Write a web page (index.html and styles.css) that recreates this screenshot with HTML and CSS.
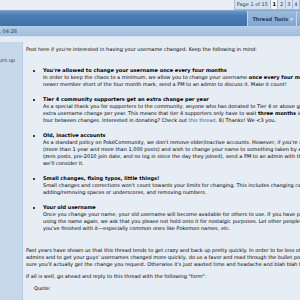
FILE: index.html
```html
<!DOCTYPE html>
<html lang="en">
<head>
    <meta charset="UTF-8">
    <meta name="viewport" content="width=device-width, initial-scale=1.0">
    <title>Username Changes - PokéCommunity</title>
    <link rel="stylesheet" href="styles.css">
</head>
<body>
    <!-- Page navigation -->
    <div class="topnav">
        <div class="pagenav">
            <span class="pageof">Page 1 of 15</span>
            <span class="pagenum current">1</span>
            <span class="pagenum">2</span>
            <span class="pagenum">3</span>
            <span class="pagenum">4</span>
        </div>
    </div>

    <!-- Thread bar -->
    <div class="threadbar">
        <div class="tool">Thread Tools <span class="arrow">&#9662;</span></div>
        <div class="tool">Search this Thread</div>
    </div>

    <!-- Post header -->
    <div class="datebar">
        <div class="postdate"><span>31st December 2010, 04:28</span></div>
    </div>

    <div class="post">
        <div class="userinfo">
            <span class="usertitle">Return up</span>
        </div>
        <div class="message">
            <p class="intro">Post here if you're interested in having your username changed. Keep the following in mind:</p>

            <ul class="rules">
                <li>
                    <b>You're allowed to change your username once every four months</b><br>
                    In order to keep the chaos to a minimum, we allow you to change your username <b>once every four months</b>. If you're a<br>
                    newer member short of the four month mark, send a PM to an admin to discuss it. Make it count!
                </li>
                <li>
                    <b>Tier 4 community supporters get an extra change per year</b><br>
                    As a special thank you for supporters to the community, anyone who has donated to Tier 4 or above gets an<br>
                    extra username change per year. This means that tier 4 supporters only have to wait <b>three months</b> instead of<br>
                    four between changes. Interested in donating? Check out <a href="#">this thread</a>. 8) Thanks! We &lt;3 you.
                </li>
                <li>
                    <b>Old, inactive accounts</b><br>
                    As a standard policy on PokéCommunity, we don't remove older/inactive accounts. However, if you're a veteran<br>
                    (more than 1 year and more than 1,000 posts) and wish to change your name to something taken by an inactive account<br>
                    (zero posts, pre-2010 join date, and no log in since the day they joined), send a PM to an admin with the details and<br>
                    we'll consider it.
                </li>
                <li>
                    <b>Small changes, fixing typos, little things!</b><br>
                    Small changes and corrections won't count towards your limits for changing. This includes changing capitalization,<br>
                    adding/removing spaces or underscores, and removing numbers.
                </li>
                <li>
                    <b>Your old username</b><br>
                    Once you change your name, your old username will become available for others to use. If you have plans on<br>
                    using the name again, we ask that you please not hold onto it for nostalgic purposes. Let other people use it once<br>
                    you've finished with it&mdash;especially common ones like Pokemon names, etc.
                </li>
            </ul>

            <p class="para">
                Past years have shown us that this thread tends to get crazy and back up pretty quickly. In order to be less of a burden on the<br>
                admins and to get your guys' usernames changed more quickly, do us a favor and read through the bullet points above to make<br>
                sure you'll actually get the change you request. Otherwise it's just wasted time and headache and blah blah blah.
            </p>
            <p class="para">If all is well, go ahead and reply to this thread with the following "form":</p>
            <div class="quote">Quote:</div>
        </div>
    </div>
</body>
</html>
```

FILE: styles.css
```css
body {
    margin: 0;
    font-family: "DejaVu Sans", Verdana, sans-serif;
    font-size: 5px;
    color: #000;
    background: #e4ebf4;
    overflow: hidden;
    width: 300px;
}

/* Page navigation */
.topnav {
    height: 10px;
    display: flex;
    justify-content: flex-end;
    align-items: flex-start;
    background: #e9eef5;
}

.pagenav {
    display: flex;
    border: 1px solid #a9bdd6;
    border-top: none;
    border-right: none;
    background: #d7e2ef;
    height: 9px;
    line-height: 9px;
}

.pageof {
    padding: 0 2px;
    color: #1f3d66;
    border-right: 1px solid #a9bdd6;
}

.pagenum {
    padding: 0 1.5px;
    color: #1f3d66;
    border-right: 1px solid #a9bdd6;
}

.pagenum.current {
    background: #f4f7fb;
    font-weight: bold;
    color: #000;
}

/* Thread bar */
.threadbar {
    height: 15px;
    display: flex;
    justify-content: flex-end;
    margin-right: -57px;
    background: linear-gradient(#6a98c8, #4a7db3 30%, #3f72a8);
    border-top: 1px solid #7ea6d0;
}

.tool {
    display: flex;
    align-items: center;
    padding: 0 3px 0 4px;
    font-weight: bold;
    color: #1c3a62;
    background: linear-gradient(#9cbadb, #80a5cd);
    border-left: 1px solid #c4d6ea;
    white-space: nowrap;
}

.arrow {
    margin-left: 2px;
    color: #e6eef8;
}

/* Post header */
.datebar {
    height: 10px;
    display: flex;
    align-items: center;
    background: linear-gradient(#b6cde6, #a2bedc);
    border-bottom: 1px solid #d6e2ef;
    margin-bottom: 5px;
    color: #1d3a60;
}

.postdate {
    width: 17px;
    display: flex;
    justify-content: flex-end;
    overflow: hidden;
    white-space: nowrap;
}

/* Post */
.post {
    display: flex;
    background: #e6edf5;
}

.userinfo {
    width: 23px;
    flex-shrink: 0;
    display: flex;
    justify-content: flex-end;
    align-items: flex-start;
    overflow: hidden;
    white-space: nowrap;
    background: #c6d7ea;
    border-right: 1px solid #b7cbe2;
    padding: 15px 7px 0 0;
    box-sizing: border-box;
    color: #1d3a60;
}

.usertitle {
    line-height: 7px;
}

.message {
    padding: 4px 0 20px 3px;
    white-space: nowrap;
    line-height: 7px;
}

.intro {
    margin: 0 0 14px;
}

.rules {
    margin: 0 0 15px;
    padding-left: 17px;
}

.rules li {
    margin-bottom: 8px;
}

.para {
    margin: 0 0 5px;
}

.message a {
    color: #1f5c99;
    text-decoration: none;
}

.quote {
    margin: 2px 0 0 8px;
}
```
